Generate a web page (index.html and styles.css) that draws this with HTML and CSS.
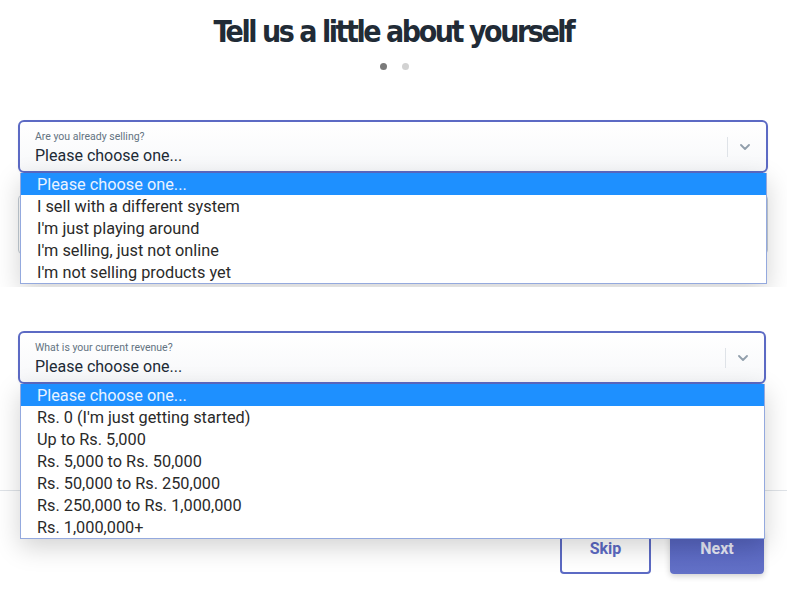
FILE: index.html
```html
<!DOCTYPE html>
<html lang="en">
<head>
    <meta charset="UTF-8">
    <meta name="viewport" content="width=device-width, initial-scale=1.0">
    <title>Tell us a little about yourself</title>
    <link rel="stylesheet" href="styles.css">
</head>
<body>
    <div class="shot shot-top">
        <h1 class="title">Tell us a little about yourself</h1>
        <div class="dots">
            <span class="dot active"></span>
            <span class="dot"></span>
        </div>
        <div class="field field-selling">
            <div class="select">
                <div class="select-text">
                    <span class="label">Are you already selling?</span>
                    <span class="value">Please choose one...</span>
                </div>
                <span class="divider"></span>
                <svg class="chevron" width="10" height="6" viewBox="0 0 10 6"><path d="M1 1l4 4 4-4" fill="none" stroke="#919eab" stroke-width="1.8" stroke-linecap="round" stroke-linejoin="round"/></svg>
            </div>
            <div class="ghost"></div>
            <ul class="options">
                <li class="selected">Please choose one...</li>
                <li>I sell with a different system</li>
                <li>I'm just playing around</li>
                <li>I'm selling, just not online</li>
                <li>I'm not selling products yet</li>
            </ul>
        </div>
    </div>

    <div class="shot shot-bottom">
        <div class="field field-revenue">
            <div class="select">
                <div class="select-text">
                    <span class="label">What is your current revenue?</span>
                    <span class="value">Please choose one...</span>
                </div>
                <span class="divider"></span>
                <svg class="chevron" width="10" height="6" viewBox="0 0 10 6"><path d="M1 1l4 4 4-4" fill="none" stroke="#919eab" stroke-width="1.8" stroke-linecap="round" stroke-linejoin="round"/></svg>
            </div>
            <ul class="options">
                <li class="selected">Please choose one...</li>
                <li>Rs. 0 (I'm just getting started)</li>
                <li>Up to Rs. 5,000</li>
                <li>Rs. 5,000 to Rs. 50,000</li>
                <li>Rs. 50,000 to Rs. 250,000</li>
                <li>Rs. 250,000 to Rs. 1,000,000</li>
                <li>Rs. 1,000,000+</li>
            </ul>
        </div>
        <div class="footer">
            <button class="btn btn-skip">Skip</button>
            <button class="btn btn-next">Next</button>
        </div>
    </div>
</body>
</html>
```

FILE: styles.css
```css
body {
    margin: 0;
    background: #ffffff;
    font-family: Roboto, "Liberation Sans", sans-serif;
    color: #212b36;
}

.shot {
    position: relative;
    display: flex;
    flex-direction: column;
    overflow: hidden;
}

.shot-top {
    height: 287px;
}

.shot-bottom {
    height: 313px;
}

.title {
    margin: 14px 0 0;
    font-family: "DejaVu Sans Condensed", "Liberation Sans", sans-serif;
    font-size: 30px;
    line-height: 36px;
    font-weight: bold;
    text-align: center;
    letter-spacing: -2.45px;
    color: #212b36;
}

.dots {
    display: flex;
    justify-content: center;
    gap: 15px;
    margin-top: 13px;
    padding-left: 1px;
}

.dot {
    width: 7px;
    height: 7px;
    border-radius: 50%;
    background: #d2d2d2;
}

.dot.active {
    background: #7a7a7a;
}

.field {
    position: relative;
    margin-left: 18px;
}

.field-selling {
    width: 750px;
    margin-top: 50px;
}

.field-revenue {
    width: 748px;
    margin-top: 44px;
    z-index: 2;
}

.select {
    position: relative;
    z-index: 1;
    display: flex;
    align-items: center;
    height: 53px;
    box-sizing: border-box;
    padding: 0 16px 0 15px;
    border: 2px solid #5c6ac4;
    border-radius: 6px;
    background: linear-gradient(#ffffff, #f7f8fa);
    box-shadow: 0 1px 2px rgba(0, 0, 0, 0.08);
}

.select-text {
    flex: 1;
    display: flex;
    flex-direction: column;
    padding-top: 3px;
}

.label {
    font-size: 10.5px;
    line-height: 14px;
    color: #637381;
}

.value {
    margin-top: 2px;
    font-size: 16px;
    line-height: 20px;
    color: #212b36;
}

.divider {
    width: 1px;
    height: 20px;
    background: #dfe3e8;
    margin-right: 12px;
}

.ghost {
    position: absolute;
    top: 75px;
    left: 0;
    right: 0;
    height: 57px;
    border: 1px solid #c4cdd5;
    border-radius: 4px;
}

.options {
    position: absolute;
    z-index: 2;
    top: 53px;
    left: 2px;
    right: 1px;
    margin: 0;
    padding: 0;
    list-style: none;
    background: #ffffff;
    border: 1px solid #94a9de;
    border-top: none;
    box-shadow: 0 8px 24px rgba(0, 0, 0, 0.18);
}

.options li {
    height: 22px;
    line-height: 24px;
    padding-left: 16px;
    font-size: 16.3px;
    color: #2a2a2a;
}

.options li.selected {
    background: #1e90ff;
    color: #eaf3ff;
}

.footer {
    display: flex;
    justify-content: flex-end;
    gap: 19px;
    margin-top: 106px;
    padding: 39px 23px 0 0;
    border-top: 1px solid #dfe3e8;
}

.btn {
    height: 44px;
    padding-bottom: 8px;
    border-radius: 4px;
    font-family: Roboto, "Liberation Sans", sans-serif;
    font-size: 16px;
    font-weight: bold;
    cursor: pointer;
}

.btn-skip {
    width: 91px;
    border: 2px solid #5c6ac4;
    background: #ffffff;
    color: #5c6ac4;
}

.btn-next {
    width: 94px;
    border: none;
    background: linear-gradient(#5563c1, #6371c7);
    color: #e6e8f5;
    box-shadow: 0 2px 6px rgba(0, 0, 0, 0.2);
}
```
